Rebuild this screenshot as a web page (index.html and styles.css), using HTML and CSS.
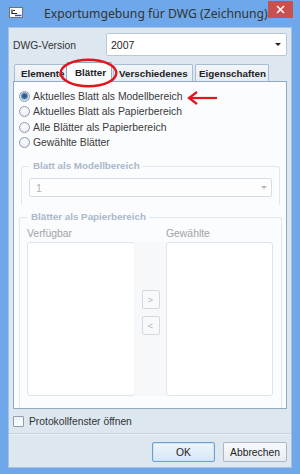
FILE: index.html
```html
<!DOCTYPE html>
<html lang="de">
<head>
<meta charset="utf-8">
<title>Exportumgebung für DWG</title>
<link rel="stylesheet" href="styles.css">
</head>
<body>
<div class="window">
  <div class="titlebar">
    <svg class="app-icon" width="14" height="11" viewBox="0 0 14 11">
      <rect x="0.5" y="0.5" width="13" height="10" fill="#fff" stroke="#6b7280"/>
      <path d="M3 2.5v4h5" fill="none" stroke="#222" stroke-width="1.2"/>
      <path d="M4 3.5h2" stroke="#222" stroke-width="1"/>
      <path d="M6 8.5h6.5" stroke="#2b4fe0" stroke-width="1.4"/>
    </svg>
    <div class="title">Exportumgebung für DWG (Zeichnung)</div>
    <div class="close">
      <svg width="9" height="9" viewBox="0 0 9 9"><path d="M1 1l7 7M8 1l-7 7" stroke="#fff" stroke-width="1.6"/></svg>
    </div>
  </div>
  <div class="dialog">
    <div class="version-row">
      <span class="lbl">DWG-Version</span>
      <div class="select"><span>2007</span><span class="caret"></span></div>
    </div>
    <div class="tabs">
      <div class="tab t1">Elemente</div>
      <div class="tab active">Blätter</div>
      <div class="tab t3">Verschiedenes</div>
      <div class="tab t4">Eigenschaften</div>
    </div>
    <div class="panel">
      <div class="radios">
        <div class="radio-row"><span class="radio checked"></span>Aktuelles Blatt als Modellbereich</div>
        <div class="radio-row"><span class="radio"></span>Aktuelles Blatt als Papierbereich</div>
        <div class="radio-row"><span class="radio"></span>Alle Blätter als Papierbereich</div>
        <div class="radio-row"><span class="radio"></span>Gewählte Blätter</div>
      </div>
      <fieldset class="group g1">
        <legend>Blatt als Modellbereich</legend>
        <div class="select disabled"><span>1</span><span class="caret"></span></div>
      </fieldset>
      <fieldset class="group g2">
        <legend>Blätter als Papierbereich</legend>
        <div class="lists">
          <div class="cap">Verfügbar</div>
          <div></div>
          <div class="cap">Gewählte</div>
          <div class="listbox"></div>
          <div class="mid">
            <div class="mbtn">&gt;</div>
            <div class="mbtn">&lt;</div>
          </div>
          <div class="listbox"></div>
        </div>
      </fieldset>
    </div>
    <div class="check-row"><span class="checkbox"></span>Protokollfenster öffnen</div>
    <div class="sep"></div>
    <div class="buttons">
      <div class="btn default">OK</div>
      <div class="btn">Abbrechen</div>
    </div>
  </div>
  <svg class="mark-ellipse" width="59" height="30" viewBox="0 0 59 30">
    <ellipse cx="29.5" cy="15" rx="27.8" ry="13.3" fill="none" stroke="#e3141b" stroke-width="2.4"/>
  </svg>
  <svg class="mark-arrow" width="32" height="16" viewBox="0 0 32 16">
    <path d="M2 8H30" stroke="#e3141b" stroke-width="2.2"/>
    <path d="M10 2L2 8l8 6" fill="none" stroke="#e3141b" stroke-width="2.2"/>
  </svg>
</div>
</body>
</html>
```
FILE: styles.css
```css
html, body {
  margin: 0;
  padding: 0;
}
body {
  font-family: "Liberation Sans", Arial, sans-serif;
  font-size: 10.3px;
  color: #333;
}
.window {
  position: relative;
  width: 300px;
  height: 474px;
  box-sizing: border-box;
  background: #6ea8ea;
  padding: 0 8px 6px;
  display: flex;
  flex-direction: column;
}
.titlebar {
  height: 27px;
  margin: 0 -8px;
  display: flex;
  align-items: flex-start;
  flex: none;
}
.app-icon {
  margin: 7px 0 0 9px;
  flex: none;
}
.title {
  margin: 5px 0 0 21px;
  font-family: "Noto Sans", "Open Sans", sans-serif;
  font-size: 12.2px;
  line-height: 18px;
  color: #333;
  white-space: nowrap;
}
.close {
  margin: 1px 7px 0 auto;
  width: 25px;
  height: 17px;
  background: #c75050;
  display: flex;
  align-items: center;
  justify-content: center;
}
.dialog {
  flex: 1;
  display: flex;
  flex-direction: column;
  background: #dce7f0;
  border: 1px solid #a8c3e0;
  padding: 0 4px;
  min-height: 0;
}
.version-row {
  margin-top: 5px;
  height: 23px;
  display: flex;
  align-items: center;
  flex: none;
}
.lbl {
  width: 93px;
  color: #333;
  padding-top: 1px;
}
.select {
  flex: 1;
  height: 23px;
  box-sizing: border-box;
  background: #fff;
  border: 1px solid #b9c8d8;
  border-radius: 2px;
  display: flex;
  align-items: center;
  padding: 0 5px 0 4px;
  font-size: 10.5px;
  color: #222;
}
.select span:first-child {
  flex: 1;
}
.caret {
  width: 0;
  height: 0;
  border-left: 3px solid transparent;
  border-right: 3px solid transparent;
  border-top: 3px solid #222;
}
.tabs {
  margin-top: 6px;
  height: 19px;
  display: flex;
  align-items: flex-end;
  flex: none;
  position: relative;
  z-index: 1;
}
.tab {
  height: 17px;
  box-sizing: border-box;
  border: 1px solid #a9bdd2;
  border-bottom: none;
  border-radius: 2px 2px 0 0;
  background: linear-gradient(#f3f6fa, #e3ebf3);
  font-weight: bold;
  font-size: 9.8px;
  color: #222;
  display: flex;
  align-items: center;
  white-space: nowrap;
  overflow: hidden;
  flex: none;
}
.t1 {
  margin-left: 1px;
  width: 54px;
  padding-left: 6px;
}
.tab.active {
  height: 20px;
  width: 46px;
  margin: 0 0 -1px -2px;
  padding-left: 8px;
  background: #fbfcfe;
  border-color: #90aac6;
  position: relative;
  z-index: 2;
}
.t3 {
  margin-left: 1px;
  width: 80px;
  padding-left: 5px;
}
.t4 {
  margin-left: 2px;
  width: 74px;
  padding-left: 3px;
}
.panel {
  flex: 1;
  min-height: 0;
  background: #fbfcfe;
  border: 1px solid #90aac6;
  display: flex;
  flex-direction: column;
}
.radios {
  padding: 7px 0 0 5px;
}
.radio-row {
  height: 15.3px;
  display: flex;
  align-items: center;
  color: #3a3a3a;
  font-size: 10.4px;
}
.radio {
  width: 11px;
  height: 11px;
  box-sizing: border-box;
  border-radius: 50%;
  border: 1px solid #8e9db0;
  background: radial-gradient(circle at 50% 35%, #ffffff, #dfe5ec);
  margin-right: 3px;
  flex: none;
}
.radio.checked {
  background: radial-gradient(circle at 50% 45%, #234f7a 0, #3a6b9c 2.2px, #7ea6cc 3.2px, #dfe7ef 4.2px);
}
.group {
  margin: 10px 6px 0 7px;
  padding: 0 7px 8px;
  border: 1px solid #e1e7ee;
  border-bottom: none;
  border-radius: 3px 3px 0 0;
  min-width: 0;
}
.group legend {
  padding: 0 3px 0 4px;
  font-weight: bold;
  font-size: 9.8px;
  line-height: 12px;
  color: #a9b8ca;
}
.select.disabled {
  margin-top: 6px;
  height: 19px;
  border-color: #d6dde5;
  background: #fdfdfe;
  color: #b3b3b3;
  padding-left: 6px;
  padding-right: 4px;
}
.select.disabled .caret {
  border-top-color: #b5b5b5;
}
.g2 {
  margin: 6px 4px 0 5px;
  padding: 0 8px 6px 7px;
  flex: 1;
}
.lists {
  display: grid;
  grid-template-columns: 108px 1fr 107px;
  grid-template-rows: auto 154px;
}
.cap {
  margin-top: 5px;
  margin-bottom: 2px;
  line-height: 12px;
  color: #9ea3a9;
  font-size: 10.4px;
}
.listbox {
  background: #fff;
  border: 1px solid #dde3ea;
  border-radius: 3px;
}
.mid {
  background: #f6f8fa;
  margin: 0 -1px;
  padding-top: 48px;
  display: flex;
  flex-direction: column;
  align-items: center;
  gap: 7px;
}
.mbtn {
  width: 18px;
  height: 19px;
  box-sizing: border-box;
  border: 1px solid #d3d9e0;
  border-radius: 2px;
  background: #f7f9fb;
  color: #b1b5ba;
  font-size: 9px;
  display: flex;
  align-items: center;
  justify-content: center;
}
.check-row {
  margin-top: 7px;
  height: 11px;
  display: flex;
  align-items: center;
  color: #333;
  flex: none;
}
.checkbox {
  width: 11px;
  height: 11px;
  box-sizing: border-box;
  border: 1px solid #8e9db0;
  background: linear-gradient(#eef1f5, #ffffff);
  margin-right: 5px;
  border-radius: 1px;
}
.sep {
  margin: 6px -4px 0;
  height: 1px;
  background: #c6d4e2;
  border-bottom: 1px solid #eaf1f7;
  flex: none;
}
.buttons {
  margin: 7px 0 5px;
  display: flex;
  justify-content: flex-end;
  gap: 8px;
  flex: none;
}
.btn {
  height: 20px;
  box-sizing: border-box;
  border: 1px solid #acb7c3;
  border-radius: 2px;
  background: linear-gradient(#f7f9fb, #e6ecf2);
  display: flex;
  align-items: center;
  justify-content: center;
  color: #222;
  width: 64px;
}
.btn.default {
  width: 63px;
  border-color: #6d9fd0;
  box-shadow: inset 0 0 0 1px #cfe3f6;
  background: linear-gradient(#eef5fc, #d7e6f4);
}
.mark-ellipse {
  position: absolute;
  left: 59px;
  top: 58px;
  z-index: 5;
}
.mark-arrow {
  position: absolute;
  left: 187px;
  top: 90px;
  z-index: 5;
}
```
